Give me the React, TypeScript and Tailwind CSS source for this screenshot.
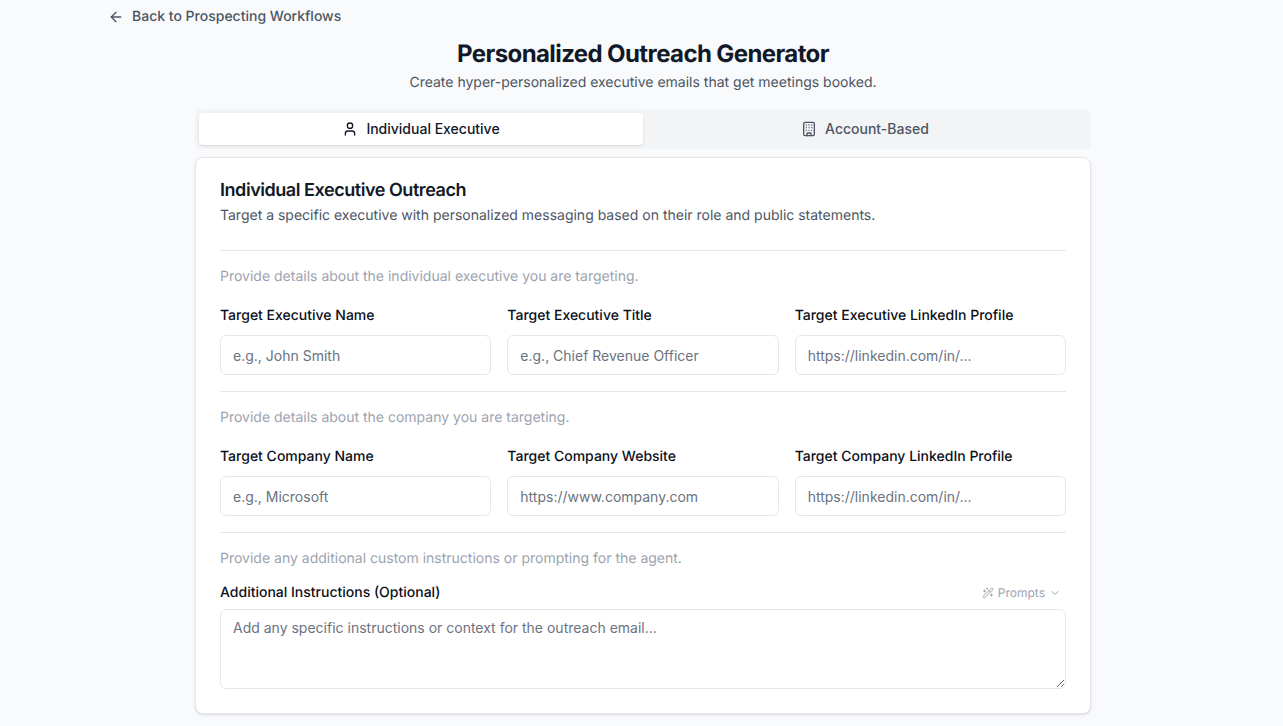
import { ArrowLeft, Building, ChevronDown, User, WandSparkles } from 'lucide-react'

const EXEC_FIELDS = [
  { label: 'Target Executive Name', placeholder: 'e.g., John Smith' },
  { label: 'Target Executive Title', placeholder: 'e.g., Chief Revenue Officer' },
  { label: 'Target Executive LinkedIn Profile', placeholder: 'https://linkedin.com/in/...' },
]

const COMPANY_FIELDS = [
  { label: 'Target Company Name', placeholder: 'e.g., Microsoft' },
  { label: 'Target Company Website', placeholder: 'https://www.company.com' },
  { label: 'Target Company LinkedIn Profile', placeholder: 'https://linkedin.com/in/...' },
]

function FieldRow({ fields }: { fields: { label: string; placeholder: string }[] }) {
  return (
    <div className="grid grid-cols-3 gap-4">
      {fields.map((f) => (
        <div key={f.label} className="flex flex-col">
          <label className="mt-[5px] mb-3 h-[14px] text-sm leading-[14px] font-medium text-[#0b0f19]">{f.label}</label>
          <input
            placeholder={f.placeholder}
            className="h-10 w-full rounded-md border border-[#e5e7eb] bg-white px-3 py-2 text-sm text-[#111827] outline-none placeholder:text-[#6b7280]"
          />
        </div>
      ))}
    </div>
  )
}

export default function App() {
  return (
    <div className="h-[726px] overflow-hidden bg-[#f9fafb] pl-[108px] pr-[105px] font-['Inter',sans-serif] [text-rendering:geometricPrecision]">
      {/* Back link */}
      <div className="flex h-[34px] items-center gap-2 text-sm font-medium text-[#4b5563]">
        <ArrowLeft className="h-4 w-4" strokeWidth={2} />
        <span>Back to Prospecting Workflows</span>
      </div>

      <div className="mx-auto max-w-4xl">
        {/* Header */}
        <div className="pt-[4px] text-center">
          <h1 className="text-2xl font-bold leading-8 tracking-tight text-[#111827]">Personalized Outreach Generator</h1>
          <p className="mt-[3px] text-sm leading-5 text-[#4b5563]">
            Create hyper-personalized executive emails that get meetings booked.
          </p>
        </div>

        {/* Tabs */}
        <div className="mt-4 grid h-10 grid-cols-2 rounded-md bg-[#f3f4f6] p-1">
          <button className="flex items-center justify-center gap-2 rounded-sm bg-white text-sm font-medium text-[#111827] shadow-sm">
            <User className="h-4 w-4" />
            Individual Executive
          </button>
          <button className="flex items-center justify-center gap-2 rounded-sm text-sm font-medium text-[#4b5563]">
            <Building className="h-4 w-4" />
            Account-Based
          </button>
        </div>

        {/* Card */}
        <div className="mt-2 rounded-lg border border-[#e5e7eb] bg-white p-6 shadow-sm">
          <h2 className="text-lg font-semibold leading-[18px] tracking-tight text-[#111827]">
            Individual Executive Outreach
          </h2>
          <p className="mt-[6px] text-sm leading-5 text-[#4b5563]">
            Target a specific executive with personalized messaging based on their role and public statements.
          </p>

          <div className="mt-6 border-t border-[#e5e7eb] pt-4">
            <p className="mb-[17px] text-sm leading-5 text-[#9ca3af]">
              Provide details about the individual executive you are targeting.
            </p>
            <FieldRow fields={EXEC_FIELDS} />
          </div>

          <div className="mt-4 border-t border-[#e5e7eb] pt-4">
            <p className="mb-[17px] text-sm leading-5 text-[#9ca3af]">
              Provide details about the company you are targeting.
            </p>
            <FieldRow fields={COMPANY_FIELDS} />
          </div>

          <div className="mt-4 border-t border-[#e5e7eb] pt-4">
            <p className="mb-3 text-sm leading-5 text-[#9ca3af]">
              Provide any additional custom instructions or prompting for the agent.
            </p>
            <div className="flex h-[24px] items-center justify-between">
              <label className="text-sm font-medium text-[#0b0f19]">Additional Instructions (Optional)</label>
              <div className="flex items-center gap-1 pr-[5px] text-xs text-[#9ca3af]">
                <WandSparkles className="h-3 w-3" />
                Prompts
                <ChevronDown className="h-3 w-3" />
              </div>
            </div>
            <textarea
              placeholder="Add any specific instructions or context for the outreach email..."
              className="mt-1 block h-20 w-full resize-y rounded-md border border-[#e5e7eb] bg-white px-3 py-2 text-sm text-[#111827] outline-none placeholder:text-[#6b7280]"
            />
          </div>
        </div>
      </div>
    </div>
  )
}
